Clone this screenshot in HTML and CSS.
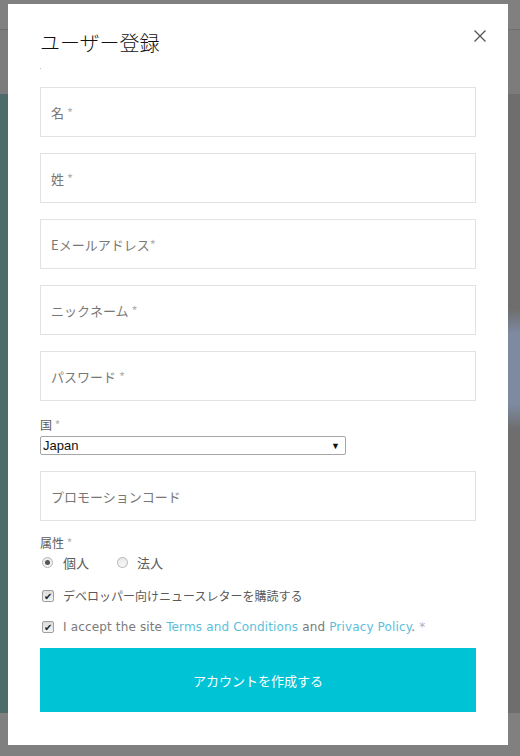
FILE: index.html
```html
<!DOCTYPE html>
<html lang="ja">
<head>
    <meta charset="UTF-8">
    <meta name="viewport" content="width=device-width, initial-scale=1.0">
    <title>ユーザー登録</title>
    <link rel="stylesheet" href="styles.css">
</head>
<body>
    <!-- page behind the overlay -->
    <div class="page">
        <div class="page-top"></div>
        <div class="page-nav"></div>
        <div class="hero"></div>
    </div>

    <div class="modal">
        <button class="close" type="button" aria-label="閉じる">
            <svg width="12" height="12" viewBox="0 0 12 12">
                <path d="M0.5 0.5 L11.5 11.5 M11.5 0.5 L0.5 11.5" stroke="#555" stroke-width="1.3" fill="none"/>
            </svg>
        </button>
        <h2 class="modal-title">ユーザー登録</h2>
        <div class="dot"></div>

        <form class="signup">
            <div class="field">名 <span class="req">*</span></div>
            <div class="field">姓 <span class="req">*</span></div>
            <div class="field">Eメールアドレス<span class="req">*</span></div>
            <div class="field">ニックネーム <span class="req">*</span></div>
            <div class="field">パスワード <span class="req">*</span></div>

            <div class="select-group">
                <div class="label">国 <span class="req">*</span></div>
                <div class="select">
                    <span>Japan</span>
                    <span class="arrow">▼</span>
                </div>
            </div>

            <div class="field">プロモーションコード</div>

            <div class="label">属性 <span class="req">*</span></div>
            <div class="radios">
                <span class="radio checked"></span><span class="opt">個人</span>
                <span class="radio"></span><span class="opt">法人</span>
            </div>

            <div class="check-row">
                <span class="checkbox">✔</span>
                <span class="jp-text">デベロッパー向けニュースレターを購読する</span>
            </div>
            <div class="check-row">
                <span class="checkbox">✔</span>
                <span class="accept">I accept the site <a href="#">Terms and Conditions</a> and <a href="#">Privacy Policy</a>. <span class="req">*</span></span>
            </div>

            <button class="btn" type="button">アカウントを作成する</button>
        </form>
    </div>
</body>
</html>
```

FILE: styles.css
```css
:root {
    --overlay: #808080;
    --teal-bg: #4e6b6c;
    --border: #e2e2e2;
    --text: #5a5a5a;
    --text-muted: #777777;
    --req: #b0b0b0;
    --link: #5bbfdc;
    --primary: #00c4d5;
}

* {
    margin: 0;
    padding: 0;
    box-sizing: border-box;
}

body {
    width: 520px;
    height: 756px;
    overflow: hidden;
    background-color: var(--overlay);
    font-family: "Noto Sans CJK JP", "Noto Sans", sans-serif;
    position: relative;
}

/* dimmed page behind the modal */
.page-top {
    height: 30px;
    border-bottom: 1px solid #6e6e6e;
}

.page-nav {
    height: 64px;
    background-color: #7c7c7c;
}

.hero {
    height: 619px;
    background:
        radial-gradient(ellipse 40px 60px at 515px 275px, #7d8aa0 0, #7d8aa0 60%, transparent 100%),
        linear-gradient(90deg, var(--teal-bg) 0, var(--teal-bg) 50%, #6b6b6b 50%, #6e6e6e 100%);
}

.modal {
    position: absolute;
    top: 4px;
    left: 8px;
    width: 500px;
    height: 741px;
    background-color: #fff;
    padding: 25px 32px 0;
}

.close {
    position: absolute;
    top: 26px;
    right: 22px;
    width: 12px;
    height: 12px;
    border: none;
    background: none;
    cursor: pointer;
    display: flex;
}

.modal-title {
    font-size: 20px;
    font-weight: 300;
    line-height: 28px;
    color: #111;
}

.dot {
    width: 1px;
    height: 1px;
    background: #bbb;
    margin: 11px 0 18px;
}

.signup {
    display: flex;
    flex-direction: column;
}

.field {
    height: 50px;
    border: 1px solid var(--border);
    padding: 0 10px;
    display: flex;
    align-items: center;
    font-size: 13px;
    color: var(--text-muted);
    margin-bottom: 16px;
    white-space: pre;
}

.req {
    color: var(--req);
}

.label {
    font-size: 12px;
    line-height: 18px;
    color: var(--text);
}

.select-group {
    margin-top: -1px;
    margin-bottom: 16px;
}

.select {
    width: 306px;
    height: 19px;
    margin-top: 2px;
    border: 1px solid #a6a6a6;
    border-radius: 2px;
    padding: 0 5px 0 2px;
    display: flex;
    align-items: center;
    justify-content: space-between;
    font-family: "Liberation Sans", Arial, sans-serif;
    font-size: 13px;
    color: #111;
}

.arrow {
    font-size: 9px;
    color: #111;
}

.signup > .label {
    margin-top: -3px;
}

.radios {
    display: flex;
    align-items: center;
    height: 20px;
    padding-left: 2px;
    font-size: 13px;
    color: var(--text);
}

.radio {
    width: 11px;
    height: 11px;
    border-radius: 50%;
    border: 1px solid #b5b5b5;
    background: linear-gradient(180deg, #e9e9e9, #f7f7f7);
    margin-right: 10px;
    display: flex;
    align-items: center;
    justify-content: center;
}

.radio.checked::after {
    content: '';
    width: 5px;
    height: 5px;
    border-radius: 50%;
    background: #555;
}

.opt {
    margin-right: 28px;
}

.opt + .radio {
    margin-right: 9px;
}

.check-row {
    display: flex;
    align-items: center;
    height: 31px;
    padding-left: 2px;
    margin-top: 8px;
}

.check-row + .check-row {
    margin-top: 0;
}

.checkbox {
    width: 12px;
    height: 12px;
    border: 1px solid #a0a0a0;
    border-radius: 2px;
    background: linear-gradient(180deg, #dcdcdc, #f4f4f4);
    font-size: 10px;
    line-height: 10px;
    color: #222;
    display: flex;
    align-items: center;
    justify-content: center;
    margin-right: 9px;
}

.jp-text {
    font-size: 12px;
    color: var(--text);
}

.accept {
    font-family: "DejaVu Sans", Verdana, sans-serif;
    font-size: 12px;
    letter-spacing: 0.15px;
    color: #7a7a7a;
}

.accept a {
    color: var(--link);
    text-decoration: none;
}

.btn {
    margin-top: 6px;
    height: 64px;
    width: 100%;
    border: none;
    background-color: var(--primary);
    color: #fff;
    font-family: "Noto Sans CJK JP", sans-serif;
    font-size: 13px;
    cursor: pointer;
}
```
